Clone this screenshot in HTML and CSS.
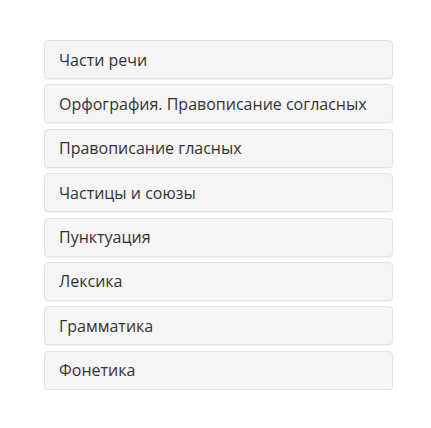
FILE: index.html
```html
<!DOCTYPE html>
<html lang="ru">
<head>
<meta charset="utf-8">
<link rel="stylesheet" href="styles.css">
</head>
<body>
<ul class="topics">
  <li class="topic">Части речи</li>
  <li class="topic">Орфография. Правописание согласных</li>
  <li class="topic">Правописание гласных</li>
  <li class="topic">Частицы и союзы</li>
  <li class="topic">Пунктуация</li>
  <li class="topic">Лексика</li>
  <li class="topic">Грамматика</li>
  <li class="topic">Фонетика</li>
</ul>
</body>
</html>
```
FILE: styles.css
```css
html, body {
  margin: 0;
  padding: 0;
  background: #ffffff;
}
body {
  font-family: "Open Sans", "Liberation Sans", sans-serif;
  font-size: 16px;
  color: #333333;
}
.topics {
  list-style: none;
  margin: 0;
  padding: 40px 38px 0 44px;
  display: flex;
  flex-direction: column;
  gap: 5.4px;
}
.topic {
  height: 37px;
  box-sizing: content-box;
  display: flex;
  align-items: center;
  padding: 0 14px;
  background: #f5f5f5;
  border: 1px solid #e3e3e3;
  border-radius: 4px;
  box-shadow: 0 1px 1px rgba(0, 0, 0, 0.05);
  line-height: 20px;
}
```
